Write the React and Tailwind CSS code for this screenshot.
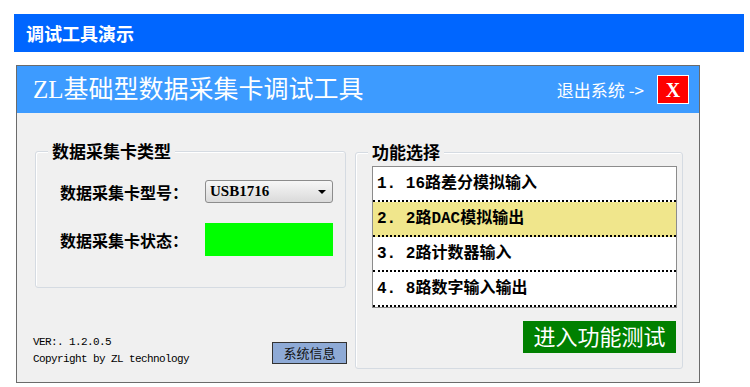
import React from "react";

const cjk = '"Noto Sans CJK SC", sans-serif';
const serif = '"Liberation Serif", "Noto Sans CJK SC", serif';
const mono = '"Liberation Mono", "Noto Sans CJK SC", monospace';

const items = [
  "1. 16路差分模拟输入",
  "2. 2路DAC模拟输出",
  "3. 2路计数器输入",
  "4. 8路数字输入输出",
];

function GroupBox({ title, className, children }) {
  return (
    <div className={`relative rounded-[3px] border border-[#d5dbe2] shadow-[inset_1px_1px_0_#ffffff] ${className}`}>
      <span
        className="absolute -top-[11px] left-[12px] px-[4px] bg-[#f0f0f0] text-[17px] font-bold leading-[20px] text-black"
        style={{ fontFamily: cjk }}
      >
        {title}
      </span>
      {children}
    </div>
  );
}

export default function App() {
  const selected = 1;

  return (
    <div className="w-[750px] h-[387px] bg-white overflow-hidden pt-[14px]">
      {/* Page bar */}
      <div className="ml-[14px] w-[730px] h-[38px] bg-[#0066ff] flex items-center pl-[12px]">
        <span className="text-white text-[18px] font-bold" style={{ fontFamily: cjk }}>
          调试工具演示
        </span>
      </div>

      {/* Window */}
      <div className="mt-[13px] ml-[16px] w-[684px] h-[318px] border border-[#6b6b6b] flex flex-col">
        {/* Header */}
        <div className="h-[47px] bg-[#3d9bff] flex items-center pl-[16px] pr-[10px]">
          <span className="text-white text-[25px] leading-none" style={{ fontFamily: serif }}>
            ZL基础型数据采集卡调试工具
          </span>
          <span className="ml-auto text-white text-[17px]" style={{ fontFamily: cjk }}>
            退出系统 -&gt;
          </span>
          <div className="ml-[13px] w-[32px] h-[29px] bg-[#ff0000] border border-white flex items-center justify-center">
            <span className="text-white text-[20px] font-bold leading-none" style={{ fontFamily: serif }}>
              X
            </span>
          </div>
        </div>

        {/* Body */}
        <div className="flex-1 bg-[#f0f0f0] flex">
          {/* Left column */}
          <div className="ml-[18px] mt-[38px] w-[311px] flex flex-col">
            <GroupBox title="数据采集卡类型" className="h-[137px] pl-[24px] pt-[28px]">
              <div className="flex items-center h-[23px]">
                <span className="w-[145px] text-[16px] font-bold text-black" style={{ fontFamily: cjk }}>
                  数据采集卡型号：
                </span>
                <div className="w-[128px] h-[23px] rounded-[3px] border border-[#8c8c8c] bg-gradient-to-b from-[#f7f7f7] to-[#dadada] flex items-center pl-[4px] pr-[6px]">
                  <span className="text-[15px] font-bold text-black" style={{ fontFamily: serif }}>
                    USB1716
                  </span>
                  <span className="ml-auto w-0 h-0 border-l-[4px] border-r-[4px] border-t-[4px] border-l-transparent border-r-transparent border-t-black"></span>
                </div>
              </div>
              <div className="flex items-center h-[33px] mt-[20px]">
                <span className="w-[145px] text-[16px] font-bold text-black" style={{ fontFamily: cjk }}>
                  数据采集卡状态：
                </span>
                <div className="w-[128px] h-[33px] bg-[#00ff00]"></div>
              </div>
            </GroupBox>

            <div className="mt-[46px] -ml-[2px] flex items-start">
              <div className="text-[11px] leading-[17px] tracking-[-0.6px] text-black" style={{ fontFamily: mono }}>
                <div>VER:. 1.2.0.5</div>
                <div>Copyright by ZL technology</div>
              </div>
              <button
                className="ml-auto mr-[-1px] mt-[8px] w-[75px] h-[22px] bg-[#8eaad6] border border-[#333333] text-[13px] text-[#111111] flex items-center justify-center"
                style={{ fontFamily: cjk }}
              >
                系统信息
              </button>
            </div>
          </div>

          {/* Right column */}
          <div className="ml-[9px] mt-[39px]">
            <GroupBox title="功能选择" className="w-[328px] h-[217px] pl-[16px] pr-[5px] pt-[13px] flex flex-col">
              <div className="border border-[#8c8c8c] bg-white">
                {items.map((text, i) => (
                  <div
                    key={text}
                    className={`h-[35px] flex items-center pl-[4px] border-b-2 border-dotted border-black ${
                      i === selected ? "bg-[#f0e68c]" : "bg-white"
                    }`}
                  >
                    <span className="text-[16px] font-bold text-black whitespace-pre" style={{ fontFamily: mono }}>
                      {text}
                    </span>
                  </div>
                ))}
              </div>
              <button
                className="self-end mr-[1px] mt-[13px] w-[153px] h-[32px] bg-[#008000] text-white text-[22px] flex items-center justify-center"
                style={{ fontFamily: serif }}
              >
                进入功能测试
              </button>
            </GroupBox>
          </div>
        </div>
      </div>
    </div>
  );
}
